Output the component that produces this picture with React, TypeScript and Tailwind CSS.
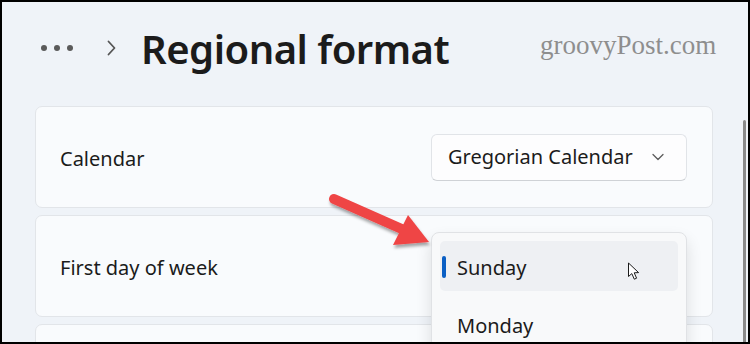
import React from 'react';

const font = { fontFamily: '"Noto Sans", "Open Sans", Arial, sans-serif' };

function Chevron() {
  return (
    <svg width="12" height="8" viewBox="0 0 12 8" className="text-[#5c5c5c]">
      <path d="M1 1.5 L6 6.5 L11 1.5" fill="none" stroke="currentColor" strokeWidth="1.3" strokeLinecap="round" strokeLinejoin="round" />
    </svg>
  );
}

function Cursor() {
  return (
    <svg width="15" height="19" viewBox="0 0 15 19" className="absolute left-[625px] top-[260px] z-20">
      <path
        d="M1.5 1 L1.5 14.5 L4.8 11.6 L7.3 17.2 L9.6 16.2 L7.2 10.8 L11.6 10.6 Z"
        fill="#ffffff"
        stroke="#1b1b1b"
        strokeWidth="1"
        strokeLinejoin="round"
      />
    </svg>
  );
}

function RedArrow() {
  return (
    <svg width="750" height="344" viewBox="0 0 750 344" className="absolute left-[-2px] top-[-2px] z-20 pointer-events-none">
      <defs>
        <filter id="arrowShadow" x="-20%" y="-20%" width="140%" height="160%">
          <feDropShadow dx="1" dy="3" stdDeviation="1.6" floodColor="#000000" floodOpacity="0.35" />
        </filter>
      </defs>
      <g filter="url(#arrowShadow)">
        <line x1="334" y1="199" x2="404" y2="230" stroke="#ef4444" strokeWidth="10" strokeLinecap="round" />
        <polygon points="429,242 393,245 408,215" fill="#ef4444" />
      </g>
    </svg>
  );
}

function Card({ label, children }: { label: string; children?: React.ReactNode }) {
  return (
    <div className="relative h-[102px] shrink-0 rounded-[7px] border border-[#e2e5e9] bg-[#f9fbfd] flex items-center justify-between pl-[24px] pr-[25px]">
      <span className="text-[20px] text-[#1b1b1b] pt-[4px]">{label}</span>
      {children}
    </div>
  );
}

export default function App() {
  return (
    <div
      className="relative w-[750px] h-[344px] overflow-hidden border-2 border-black bg-[#eff3f8]"
      style={font}
    >
      {/* header */}
      <div className="flex items-center h-[94px] pl-[39px]">
        <div className="flex items-center gap-[7px] mt-[-2px]">
          <span className="w-[6px] h-[6px] rounded-full bg-[#5a5a5a]" />
          <span className="w-[6px] h-[6px] rounded-full bg-[#5a5a5a]" />
          <span className="w-[6px] h-[6px] rounded-full bg-[#5a5a5a]" />
        </div>
        <svg width="11" height="16" viewBox="0 0 11 16" className="ml-[33px] mt-[-2px] text-[#555555]">
          <path d="M2.5 1.5 L8.5 8 L2.5 14.5" fill="none" stroke="currentColor" strokeWidth="1.8" strokeLinecap="round" strokeLinejoin="round" />
        </svg>
        <h1 className="ml-[24px] text-[40px] font-semibold leading-none tracking-[-0.5px] text-[#1b1b1b]">Regional format</h1>
      </div>

      <span
        className="absolute left-[538px] top-[23px] text-[27px] text-[#8e8e8e]"
        style={{ fontFamily: '"Liberation Serif", "Times New Roman", serif' }}
      >
        groovyPost.com
      </span>

      {/* settings cards */}
      <div className="flex flex-col gap-[7px] ml-[33px] w-[678px] mt-[10px]">
        <Card label="Calendar">
          <button className="w-[256px] h-[47px] rounded-[6px] border border-[#e1e4e8] border-b-[#cfd2d6] bg-[#fdfdfe] flex items-center justify-between pl-[16px] pr-[22px]">
            <span className="text-[20px] text-[#1b1b1b]">Gregorian Calendar</span>
            <Chevron />
          </button>
        </Card>
        <Card label="First day of week">
          <div className="absolute z-10 left-[395px] top-[16px] w-[256px] h-[150px] rounded-[8px] border border-[#e0e2e5] bg-[#f8f9fa] p-[8px] shadow-[0_8px_16px_rgba(0,0,0,0.12)]">
            <div className="relative h-[50px] rounded-[5px] bg-[#eef0f3] flex items-center pl-[17px]">
              <span className="absolute left-[2px] top-[15px] w-[4px] h-[22px] rounded-full bg-[#0a5fc4]" />
              <span className="text-[20px] text-[#1b1b1b] pt-[3px]">Sunday</span>
            </div>
            <div className="h-[50px] mt-[8px] flex items-center pl-[17px]">
              <span className="text-[20px] text-[#1b1b1b] pt-[3px]">Monday</span>
            </div>
          </div>
        </Card>
        <Card label="" />
      </div>

      {/* scrollbar */}
      <div className="absolute left-[741px] top-[118px] w-[3px] h-[240px] rounded-full bg-[#8a8a8a]" />

      <Cursor />
      <RedArrow />
    </div>
  );
}
